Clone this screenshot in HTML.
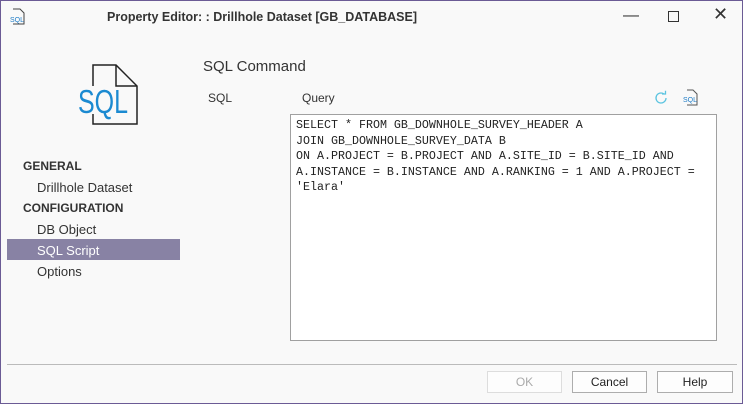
<!DOCTYPE html>
<html><head><meta charset="utf-8"><style>
body{margin:0;width:743px;height:404px;overflow:hidden;font-family:"Liberation Sans",sans-serif;}
.win{position:absolute;left:0;top:0;width:741px;height:402px;border:1px solid #6b5b95;background:#f9f9f9;}
.t{position:absolute;white-space:nowrap;}
.sel{position:absolute;left:6px;top:238px;width:173px;height:21px;background:#8882a4;}
.code{position:absolute;left:289px;top:113px;width:425px;height:225px;background:#fff;border:1px solid #a0a0a0;}
pre{margin:0;position:absolute;left:5px;top:3px;font-family:"Liberation Mono",monospace;font-size:11.67px;line-height:15.5px;color:#222;}
.btn{position:absolute;top:370px;height:20px;border:1px solid #adadad;background:#fdfdfd;font-size:12px;text-align:center;line-height:20px;color:#222;}
</style></head><body><div class="win">
<svg class="t" style="left:8px;top:7px" width="18" height="18" viewBox="0 0 18 18"><path d="M4 1h7l4 4v11H4" fill="none" stroke="#444" stroke-width="1"/><text x="1" y="14" font-size="7" fill="#1e7cc6" font-family="Liberation Sans">SQL</text></svg>
<div class="t" style="left:106px;top:9px;font-size:12.5px;font-weight:bold;color:#333">Property Editor: : Drillhole Dataset [GB_DATABASE]</div>
<div class="t" style="left:622px;top:6px;font-size:16px;color:#333">&#8212;</div>
<div class="t" style="left:667px;top:10px;width:9px;height:9px;border:1px solid #333"></div>
<div class="t" style="left:712px;top:3px;font-size:18px;color:#333">&#10005;</div>
<svg class="t" style="left:75px;top:63px" width="65" height="62" viewBox="0 0 65 62"><path d="M17 22V1h23l21 21v38H17V50" fill="none" stroke="#222" stroke-width="1.5"/><path d="M40 1v21h21" fill="none" stroke="#222" stroke-width="1.5"/><text x="2" y="49" font-size="33" textLength="50" lengthAdjust="spacingAndGlyphs" fill="#1b8ad1" font-family="Liberation Sans">SQL</text></svg>
<div class="t" style="left:202px;top:57px;font-size:15px;color:#333">SQL Command</div>
<div class="t" style="left:207px;top:90px;font-size:12px;color:#333">SQL</div>
<div class="t" style="left:301px;top:90px;font-size:12px;color:#333">Query</div>
<svg class="t" style="left:652px;top:89px" width="16" height="16" viewBox="0 0 16 16"><path d="M13 8a5 5 0 1 1-2-4" fill="none" stroke="#5bc4e0" stroke-width="1.3"/><path d="M9 4h3.5V0.8" fill="none" stroke="#5bc4e0" stroke-width="1.3"/></svg>
<svg class="t" style="left:681px;top:88px" width="17" height="17" viewBox="0 0 17 17"><path d="M5 1h6l4 4v11H5" fill="none" stroke="#555"/><text x="1" y="13" font-size="7" fill="#1e7cc6" font-family="Liberation Sans">SQL</text></svg>
<div class="t" style="left:22px;top:158px;font-size:12px;font-weight:bold;color:#333">GENERAL</div>
<div class="t" style="left:36px;top:179px;font-size:13px;color:#333">Drillhole Dataset</div>
<div class="t" style="left:22px;top:200px;font-size:12px;font-weight:bold;color:#333">CONFIGURATION</div>
<div class="t" style="left:36px;top:221px;font-size:13px;color:#333">DB Object</div>
<div class="sel"></div>
<div class="t" style="left:36px;top:242px;font-size:13px;color:#fff">SQL Script</div>
<div class="t" style="left:36px;top:263px;font-size:13px;color:#333">Options</div>
<div class="code"><pre>SELECT * FROM GB_DOWNHOLE_SURVEY_HEADER A
JOIN GB_DOWNHOLE_SURVEY_DATA B
ON A.PROJECT = B.PROJECT AND A.SITE_ID = B.SITE_ID AND
A.INSTANCE = B.INSTANCE AND A.RANKING = 1 AND A.PROJECT =
'Elara'</pre></div>
<div class="t" style="left:6px;top:363px;width:730px;height:1px;background:#bbb"></div>
<div class="btn" style="left:486px;width:73px;color:#aaa;border-color:#ddd">OK</div>
<div class="btn" style="left:571px;width:73px">Cancel</div>
<div class="btn" style="left:656px;width:74px">Help</div>
</div></body></html>
